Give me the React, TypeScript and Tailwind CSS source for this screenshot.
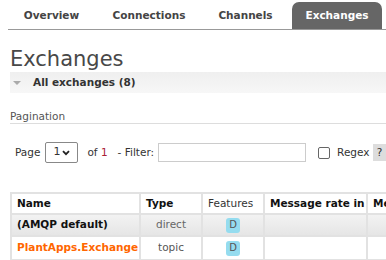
import React from 'react';

const tabs = [
  {label: 'Overview', w: 'w-[83px]'},
  {label: 'Connections', w: 'w-[100px]'},
  {label: 'Channels', w: 'w-[81px]'},
  {label: 'Exchanges', w: 'w-[90px]', active: true}
];

function Badge() {
  return (
    <span className="inline-flex h-[15px] w-[14px] items-center justify-center rounded-[3px] bg-[#95dcef] text-[10px] leading-none text-[#555]">
      D
    </span>
  );
}

export default function App() {
  const cell = 'border border-[#e2e2e2] px-[5px] align-middle';

  return (
    <div className="h-[260px] w-[386px] overflow-hidden bg-white font-['DejaVu_Sans',sans-serif] text-[10.5px] text-[#444]">
      <div className="ml-2 mt-[2px] flex gap-[6px] border-b border-[#999] pl-[2px]">
        {tabs.map((t) => (
          <div
            key={t.label}
            className={`${t.w} flex h-[27px] shrink-0 items-center justify-center rounded-t-[7px] font-bold ${t.active ? 'bg-[#666] text-white' : 'text-[#444]'}`}
          >
            {t.label}
          </div>
        ))}
      </div>

      <div className="pl-[10px]">
        <h1 className="mt-[17px] text-[21px] leading-[25px] font-normal text-[#484848]">Exchanges</h1>

        <div className="flex h-[21px] items-center bg-gradient-to-b from-[#efefef] to-[#f7f7f7] pl-[3px]">
          <svg width="8" height="6" viewBox="0 0 8 6" className="mr-[12px]">
            <path d="M0 1 L8 1 L4 5 Z" fill="#aaa" />
          </svg>
          <span className="font-bold text-[#333]">All exchanges (8)</span>
        </div>

        <div className="mt-[16px] border-b border-[#ddd] leading-[14px] text-[#555]">Pagination</div>

        <div className="mt-[18px] flex h-[21px] w-[420px] items-center whitespace-nowrap pl-[5px] text-[#333] [&>*]:shrink-0">
          <span>Page</span>
          <div className="ml-[5px] flex h-[21px] w-[33px] items-center justify-between rounded-[2px] border border-[#888] pr-[7px] pl-[7px]">
            <span className="text-[11px]">1</span>
            <svg width="8" height="6" viewBox="0 0 8 6">
              <path d="M1 1.2 L4 4.2 L7 1.2" stroke="#222" strokeWidth="1.8" fill="none" />
            </svg>
          </div>
          <span className="ml-[9px]">
            of <span className="text-[#a23]">1</span>
          </span>
          <span className="ml-[10px]">- Filter:</span>
          <div className="ml-[4px] h-[19px] w-[148px] border border-[#ccc]" />
          <div className="ml-[12px] h-[12px] w-[12px] rounded-[2px] border border-[#666]" />
          <span className="ml-[7px]">Regex</span>
          <span className="ml-[3px] flex h-[17px] w-[14px] items-center justify-center bg-[#ddd] text-[#333]">?</span>
        </div>

        <table className="mt-[29px] w-[420px] table-fixed border-separate border-spacing-0 border border-[#e2e2e2]">
          <colgroup>
            <col className="w-[129px]" />
            <col className="w-[62px]" />
            <col className="w-[62px]" />
            <col className="w-[103px]" />
            <col />
          </colgroup>
          <thead>
            <tr className="h-[21px] text-left text-[#111]">
              <th className={`${cell} font-bold`}>Name</th>
              <th className={`${cell} font-bold`}>Type</th>
              <th className={`${cell} font-normal text-[#333]`}>Features</th>
              <th className={`${cell} font-bold whitespace-nowrap`}>Message rate in</th>
              <th className={`${cell} font-bold whitespace-nowrap`}>Message rate out</th>
            </tr>
          </thead>
          <tbody>
            <tr className="h-[22px] bg-gradient-to-b from-[#f3f3f3] to-[#e5e5e5]">
              <td className={`${cell} font-bold whitespace-nowrap text-[#111]`}>(AMQP default)</td>
              <td className={`${cell} text-center text-[#666]`}>direct</td>
              <td className={`${cell} text-center`}><Badge /></td>
              <td className={cell}></td>
              <td className={cell}></td>
            </tr>
            <tr className="h-[24px] bg-white">
              <td className={`${cell} font-bold whitespace-nowrap text-[#f60]`}>PlantApps.Exchange</td>
              <td className={`${cell} text-center text-[#555]`}>topic</td>
              <td className={`${cell} text-center`}><Badge /></td>
              <td className={cell}></td>
              <td className={cell}></td>
            </tr>
          </tbody>
        </table>
      </div>
    </div>
  );
}
